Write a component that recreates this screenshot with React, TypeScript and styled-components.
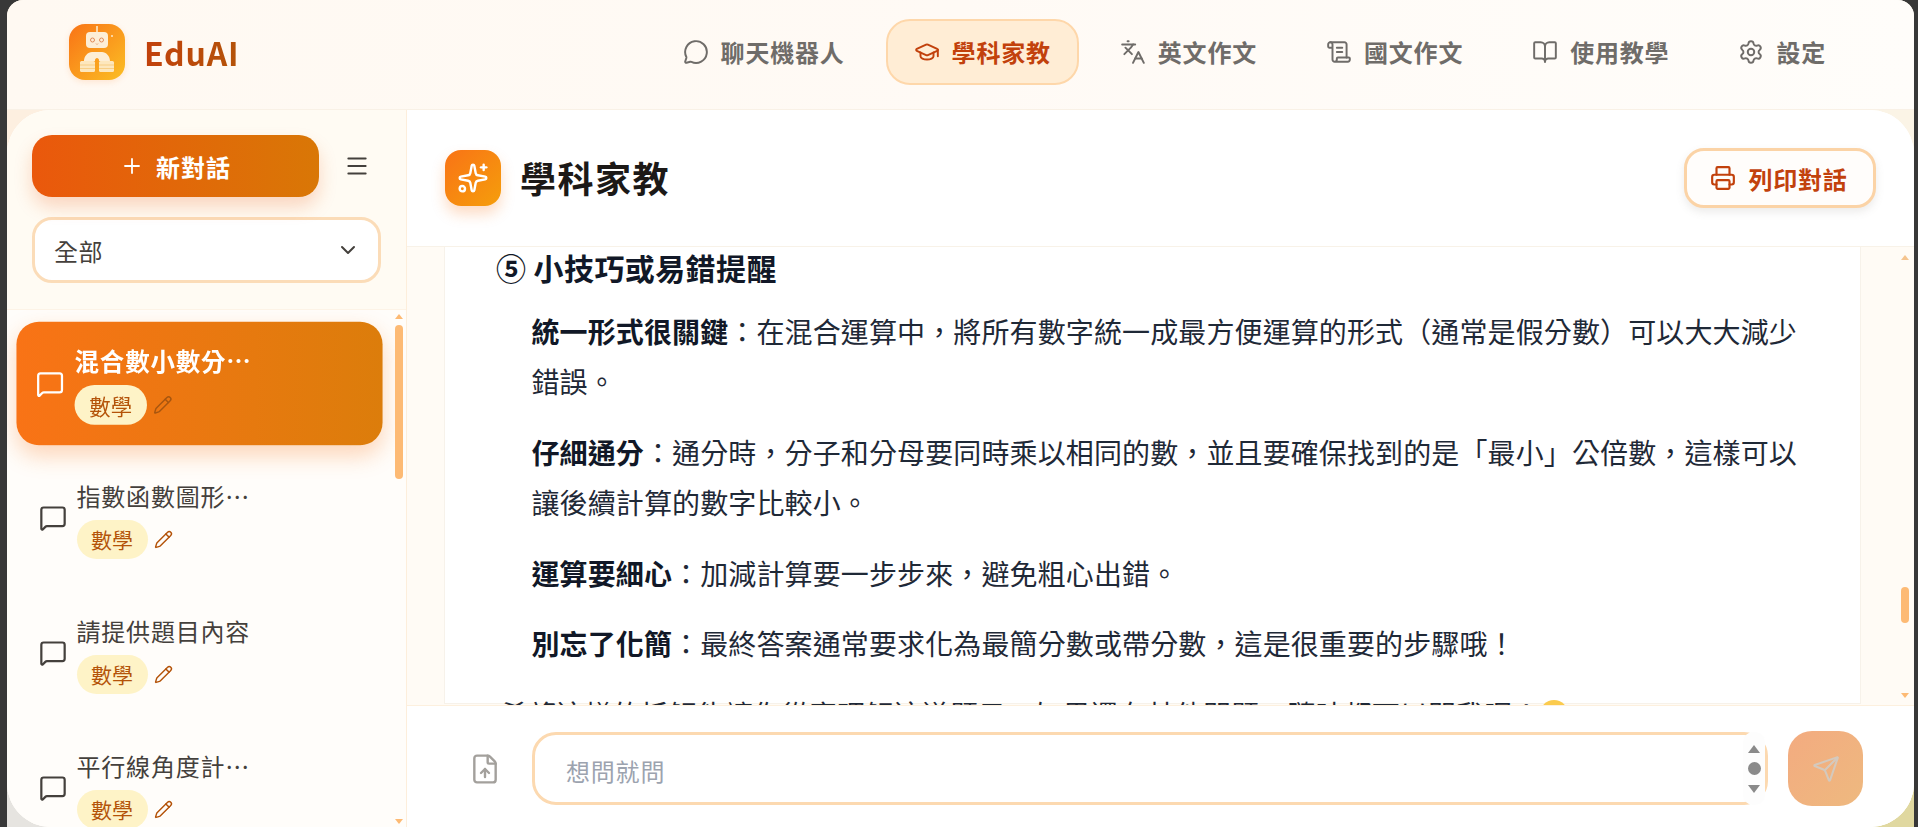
import React from 'react';
import styled, { createGlobalStyle } from 'styled-components';
import {
  BookOpen,
  ChevronDown,
  FileUp,
  GraduationCap,
  Languages,
  Menu,
  MessageCircle,
  MessageSquare,
  Pencil,
  Plus,
  Printer,
  ScrollText,
  Send,
  Settings,
  Sparkles,
} from 'lucide-react';

const GlobalStyle = createGlobalStyle`
  html, body {
    margin: 0;
    height: 100%;
    overflow: hidden;
    background: #383838;
  }
  #root {
    height: 100%;
  }
  * {
    box-sizing: border-box;
  }
`;

const Shell = styled.div`
  height: 100%;
  padding: 0 4px 0 7px;
  font-family: 'Noto Sans CJK TC', 'Noto Sans', sans-serif;
`;

const AppWindow = styled.div`
  height: 100%;
  display: flex;
  flex-direction: column;
  overflow: hidden;
  border-radius: 16px 16px 0 0;
  background:
    linear-gradient(to right, #fdefe0 50%, #fbf4e6 50%) top / 100% 50% no-repeat,
    linear-gradient(to right, #e6e4e0 50%, #e0d8a0 50%) bottom / 100% 50% no-repeat;
`;

const Header = styled.header`
  height: 110px;
  flex-shrink: 0;
  display: flex;
  align-items: center;
  justify-content: space-between;
  padding: 0 60px 6px 62px;
  background: linear-gradient(90deg, #fff9f2 0%, #fffaf5 50%, #fffdfa 100%);
  border-bottom: 1px solid #f9f1e6;
`;

const Brand = styled.div`
  display: flex;
  align-items: center;
  gap: 19px;
`;

const LogoBox = styled.div`
  width: 56px;
  height: 56px;
  border-radius: 16px;
  overflow: hidden;
  background: linear-gradient(135deg, #f97316 0%, #fbbf24 100%);
  box-shadow: 0 2px 6px rgba(249, 115, 22, 0.15);
`;

const BrandName = styled.span`
  font-size: 32px;
  font-weight: 700;
  letter-spacing: 0.8px;
  line-height: 1;
  background: linear-gradient(90deg, #c2410c, #b45309);
  -webkit-background-clip: text;
  background-clip: text;
  color: transparent;
`;

const Nav = styled.nav`
  display: flex;
  align-items: center;
  gap: 13px;
`;

const NavItem = styled.a<{ $active?: boolean }>`
  height: 66px;
  display: flex;
  align-items: center;
  gap: 12px;
  padding: 0 ${p => (p.$active ? 26 : 28)}px;
  border-radius: 24px;
  border: ${p => (p.$active ? '2px solid #fed7aa' : 'none')};
  background: ${p => (p.$active ? '#ffedd5' : 'transparent')};
  color: ${p => (p.$active ? '#c2410c' : '#6f6c69')};
  font-size: 24px;
  font-weight: 700;
  letter-spacing: 0.8px;
`;

const Body = styled.div`
  flex: 1;
  min-height: 0;
  display: flex;
  overflow: hidden;
  border-radius: 44px;
  background: #fff;
`;

const Sidebar = styled.aside`
  width: 400px;
  flex-shrink: 0;
  display: flex;
  flex-direction: column;
  background: #fffbf3;
  border-right: 1px solid #fdeedb;
`;

const SidebarTop = styled.div`
  height: 200px;
  flex-shrink: 0;
  padding: 25px 25px 0 25px;
  border-bottom: 1px solid #fdf3e6;
`;

const NewChatRow = styled.div`
  display: flex;
  align-items: center;
  gap: 25px;
`;

const NewChatButton = styled.button`
  width: 287px;
  height: 62px;
  display: flex;
  align-items: center;
  justify-content: center;
  gap: 12px;
  border: none;
  border-radius: 20px;
  background: linear-gradient(90deg, #ea580c 0%, #d97706 100%);
  color: #fff;
  font-family: inherit;
  font-size: 24px;
  font-weight: 700;
  letter-spacing: 1px;
  box-shadow: 0 10px 18px rgba(234, 88, 12, 0.22);
`;

const MenuButton = styled.span`
  display: flex;
  color: #44403c;
`;

const FilterSelect = styled.div`
  margin-top: 20px;
  height: 66px;
  display: flex;
  align-items: center;
  justify-content: space-between;
  padding: 0 18px 0 19px;
  border: 3px solid #fbdcb8;
  border-radius: 20px;
  background: #fff;
  color: #44403c;
  font-size: 24px;
  letter-spacing: 0.6px;
`;

const ChatList = styled.div`
  position: relative;
  flex: 1;
  min-height: 0;
  overflow: hidden;
  display: flex;
  flex-direction: column;
  gap: 14px;
  padding: 12.5px 28px 0 12.5px;
  background: #fffdfa;
`;

const ChatItem = styled.div<{ $active?: boolean }>`
  flex-shrink: 0;
  height: 121px;
  display: flex;
  align-items: center;
  gap: 10px;
  padding: 0 19px;
  border-radius: 22px;
  color: ${p => (p.$active ? '#fff' : '#44403c')};
  ${p =>
    p.$active &&
    `
    background: linear-gradient(90deg, #f97316 0%, #dc7d0b 100%);
    box-shadow: 0 10px 22px rgba(249, 115, 22, 0.28);
    transform: scale(1.02);
  `}
`;

const ChatText = styled.div`
  min-width: 0;
  display: flex;
  flex-direction: column;
  gap: 6px;
`;

const ChatTitle = styled.div<{ $active?: boolean }>`
  width: 178px;
  height: 36px;
  line-height: 36px;
  font-size: 24px;
  font-weight: ${p => (p.$active ? 700 : 400)};
  letter-spacing: 0.8px;
  white-space: nowrap;
  overflow: hidden;
  text-overflow: ellipsis;
`;

const TagRow = styled.div<{ $active?: boolean }>`
  display: flex;
  align-items: center;
  gap: 6px;
  color: ${p => (p.$active ? '#a8560f' : '#b45309')};
`;

const SubjectTag = styled.span`
  width: 71px;
  height: 39px;
  display: flex;
  align-items: center;
  justify-content: center;
  border-radius: 20px;
  background: #fef3c7;
  color: #b45309;
  font-size: 21px;
`;

const Main = styled.main`
  flex: 1;
  min-width: 0;
  display: flex;
  flex-direction: column;
  background: #fff;
`;

const TitleBar = styled.div`
  height: 137px;
  flex-shrink: 0;
  display: flex;
  align-items: center;
  justify-content: space-between;
  padding: 0 38px 0 38px;
  border-bottom: 1px solid #f8f2e8;
`;

const TitleGroup = styled.div`
  display: flex;
  align-items: center;
  gap: 19px;
`;

const TitleBadge = styled.div`
  width: 56px;
  height: 56px;
  display: flex;
  align-items: center;
  justify-content: center;
  border-radius: 16px;
  background: linear-gradient(135deg, #f97316 0%, #f59e0b 100%);
  color: #fff;
  box-shadow: 0 8px 14px rgba(249, 115, 22, 0.25);
`;

const PageTitle = styled.h1`
  margin: -2px 0 0;
  font-size: 36px;
  font-weight: 700;
  letter-spacing: 1.5px;
  color: #1c1917;
`;

const PrintButton = styled.button`
  width: 192px;
  height: 60px;
  display: flex;
  align-items: center;
  justify-content: center;
  gap: 12px;
  padding: 0 8px 0 6px;
  border: 3px solid #fbd3a6;
  border-radius: 20px;
  background: #fffdfb;
  color: #c2410c;
  font-family: inherit;
  font-size: 24px;
  font-weight: 700;
  letter-spacing: 0.8px;
  box-shadow: 0 4px 8px rgba(120, 113, 108, 0.14);
`;

const Messages = styled.div`
  position: relative;
  flex: 1;
  min-height: 0;
  overflow: hidden;
  padding: 0 54px 0 38px;
  background: #fffbf5;
`;

const Bubble = styled.div`
  height: 100%;
  padding: 0 0 0 51px;
  background: #fff;
  box-shadow: 0 0 0 1px #f7f2ea;
  color: #1f2937;
  font-size: 28px;
  line-height: 50.4px;
  letter-spacing: 0.12px;
`;

const SectionHeading = styled.h3`
  margin: -2px 0 16px;
  font-size: 30px;
  line-height: 45px;
  font-weight: 700;
  letter-spacing: 0.4px;
  color: #111827;
`;

const Paragraph = styled.p`
  margin: 0 40px 20.1px 35.5px;
  strong {
    font-weight: 700;
    color: #111827;
  }
`;

const Closing = styled.p`
  margin: 0 0 0 4px;
  white-space: nowrap;
  display: flex;
  align-items: center;
`;

const InputBar = styled.div`
  height: 122px;
  flex-shrink: 0;
  display: flex;
  align-items: center;
  gap: 31px;
  padding: 4px 51px 0 62px;
  background: #fff;
  border-top: 1px solid #fdf0de;
`;

const UploadButton = styled.span`
  display: flex;
  color: #a3a09c;
`;

const InputBox = styled.div`
  position: relative;
  flex: 1;
  height: 73px;
  display: flex;
  align-items: center;
  padding: 4px 31px 0;
  border: 3px solid #fcd9b0;
  border-radius: 24px;
  background: #fff;
  color: #9ca3af;
  font-size: 24px;
  letter-spacing: 0.8px;
`;

const InputScroller = styled.div`
  position: absolute;
  top: -3px;
  bottom: -3px;
  right: 0;
  width: 22px;
  display: flex;
  flex-direction: column;
  align-items: center;
  justify-content: center;
  gap: 9.5px;
  border-radius: 10px;
  background: #fdfdfd;
`;

const ScrollDot = styled.span`
  width: 13px;
  height: 13px;
  border-radius: 50%;
  background: #8a8a8a;
`;

const Arrow = styled.span<{ $down?: boolean; $color: string; $w: number; $h: number }>`
  display: block;
  flex-shrink: 0;
  width: 0;
  height: 0;
  border-left: ${p => p.$w / 2}px solid transparent;
  border-right: ${p => p.$w / 2}px solid transparent;
  ${p => (p.$down ? 'border-top' : 'border-bottom')}: ${p => p.$h}px solid ${p => p.$color};
`;

const SendButton = styled.button`
  width: 75px;
  height: 75px;
  flex-shrink: 0;
  margin-left: -11px;
  display: flex;
  align-items: center;
  justify-content: center;
  border: none;
  border-radius: 24px;
  background: linear-gradient(135deg, #f3ab80 0%, #eeb97f 100%);
  color: #d4c9bd;
`;

const ScrollRail = styled.div<{ $right: number; $top: number; $bottom: number }>`
  position: absolute;
  top: ${p => p.$top}px;
  bottom: ${p => p.$bottom}px;
  right: ${p => p.$right}px;
  width: 8px;
  display: flex;
  flex-direction: column;
  align-items: center;
`;

const ScrollThumb = styled.div<{ $offset: number; $height: number }>`
  width: 8px;
  height: ${p => p.$height}px;
  margin-top: ${p => p.$offset}px;
  margin-bottom: auto;
  border-radius: 4px;
  background: #fdba74;
`;

function RobotLogo() {
  return (
    <svg width="56" height="56" viewBox="0 0 56 56">
      <rect x="27.2" y="2" width="1.6" height="7" fill="#fde9c8" />
      <rect x="17" y="8" width="22" height="16" rx="4" fill="#fdeed6" />
      <circle cx="23.5" cy="16" r="2" fill="none" stroke="#e08a5a" strokeWidth="1" />
      <circle cx="32.5" cy="16" r="2" fill="none" stroke="#e08a5a" strokeWidth="1" />
      <path d="M27 19.5l1 1 1-1" fill="none" stroke="#e08a5a" strokeWidth="0.8" />
      <circle cx="43" cy="12" r="1" fill="#fde9c8" />
      <path d="M15 37c0-5 4-9 8-9h10c4 0 8 4 8 9H30v-1c0-1-1-2-2-2s-2 1-2 2v1z" fill="#fdeed6" />
      <rect x="11" y="37" width="15" height="11" rx="1.5" fill="#fde7bd" />
      <rect x="30" y="37" width="15" height="11" rx="1.5" fill="#fde7bd" />
      <path d="M11 41h15M11 44.500h15M30 41h15M30 44.500h15" stroke="#f5c877" strokeWidth="0.8" />
    </svg>
  );
}

function SmileFace() {
  return (
    <svg width="28" height="28" viewBox="0 0 28 28">
      <circle cx="14" cy="14" r="14" fill="#fbcb4e" />
    </svg>
  );
}

const navItems = [
  { label: '聊天機器人', icon: MessageCircle },
  { label: '學科家教', icon: GraduationCap, active: true },
  { label: '英文作文', icon: Languages },
  { label: '國文作文', icon: ScrollText },
  { label: '使用教學', icon: BookOpen },
  { label: '設定', icon: Settings },
];

const chats = [
  { title: '混合數小數分數四則運算', active: true },
  { title: '指數函數圖形的平移' },
  { title: '請提供題目內容' },
  { title: '平行線角度計算問題' },
];

// full-width punctuation kept as escapes
const tips = [
  {
    lead: '統一形式很關鍵',
    text: '\uFF1A在混合運算中\uFF0C將所有數字統一成最方便運算的形式\uFF08通常是假分數\uFF09可以大大減少錯誤\u3002',
  },
  {
    lead: '仔細通分',
    text: '\uFF1A通分時\uFF0C分子和分母要同時乘以相同的數\uFF0C並且要確保找到的是\u300C最小\u300D公倍數\uFF0C這樣可以讓後續計算的數字比較小\u3002',
  },
  {
    lead: '運算要細心',
    text: '\uFF1A加減計算要一步步來\uFF0C避免粗心出錯\u3002',
  },
  {
    lead: '別忘了化簡',
    text: '\uFF1A最終答案通常要求化為最簡分數或帶分數\uFF0C這是很重要的步驟哦\uFF01',
  },
];

const closingText = '希望這樣的拆解能讓你從容理解這道題目\u3002如果還有其他問題\uFF0C隨時都可以問我喔\uFF01';

export default function App() {
  return (
    <Shell>
      <GlobalStyle />
      <AppWindow>
        <Header>
          <Brand>
            <LogoBox>
              <RobotLogo />
            </LogoBox>
            <BrandName>EduAI</BrandName>
          </Brand>
          <Nav>
            {navItems.map(item => (
              <NavItem key={item.label} $active={item.active}>
                <item.icon size={26} strokeWidth={1.8} />
                {item.label}
              </NavItem>
            ))}
          </Nav>
        </Header>
        <Body>
          <Sidebar>
            <SidebarTop>
              <NewChatRow>
                <NewChatButton>
                  <Plus size={24} strokeWidth={1.8} />
                  新對話
                </NewChatButton>
                <MenuButton>
                  <Menu size={26} strokeWidth={1.8} />
                </MenuButton>
              </NewChatRow>
              <FilterSelect>
                全部
                <ChevronDown size={24} strokeWidth={2} />
              </FilterSelect>
            </SidebarTop>
            <ChatList>
              {chats.map(chat => (
                <ChatItem key={chat.title} $active={chat.active}>
                  <MessageSquare size={28} strokeWidth={1.9} />
                  <ChatText>
                    <ChatTitle $active={chat.active}>{chat.title}</ChatTitle>
                    <TagRow $active={chat.active}>
                      <SubjectTag>數學</SubjectTag>
                      <Pencil size={19} strokeWidth={1.8} />
                    </TagRow>
                  </ChatText>
                </ChatItem>
              ))}
              <ScrollRail $right={3} $top={4} $bottom={3}>
                <Arrow $color="#fdba74" $w={8} $h={5} />
                <ScrollThumb $offset={6} $height={154} />
                <Arrow $down $color="#fdba74" $w={8} $h={5} />
              </ScrollRail>
            </ChatList>
          </Sidebar>
          <Main>
            <TitleBar>
              <TitleGroup>
                <TitleBadge>
                  <Sparkles size={32} strokeWidth={1.8} />
                </TitleBadge>
                <PageTitle>學科家教</PageTitle>
              </TitleGroup>
              <PrintButton>
                <Printer size={26} strokeWidth={2} />
                列印對話
              </PrintButton>
            </TitleBar>
            <Messages>
              <Bubble>
                <SectionHeading>{'\u2464'} 小技巧或易錯提醒</SectionHeading>
                {tips.map(tip => (
                  <Paragraph key={tip.lead}>
                    <strong>{tip.lead}</strong>
                    {tip.text}
                  </Paragraph>
                ))}
                <Closing>
                  {closingText}
                  <SmileFace />
                </Closing>
              </Bubble>
              <ScrollRail $right={5} $top={8} $bottom={7}>
                <Arrow $color="#f5c48e" $w={8} $h={5} />
                <ScrollThumb $offset={327} $height={36} />
                <Arrow $down $color="#fdba74" $w={8} $h={5} />
              </ScrollRail>
            </Messages>
            <InputBar>
              <UploadButton>
                <FileUp size={32} strokeWidth={1.8} />
              </UploadButton>
              <InputBox>
                想問就問
                <InputScroller>
                  <Arrow $color="#8a8a8a" $w={12} $h={8} />
                  <ScrollDot />
                  <Arrow $down $color="#8a8a8a" $w={12} $h={8} />
                </InputScroller>
              </InputBox>
              <SendButton>
                <Send size={28} strokeWidth={1.8} />
              </SendButton>
            </InputBar>
          </Main>
        </Body>
      </AppWindow>
    </Shell>
  );
}
